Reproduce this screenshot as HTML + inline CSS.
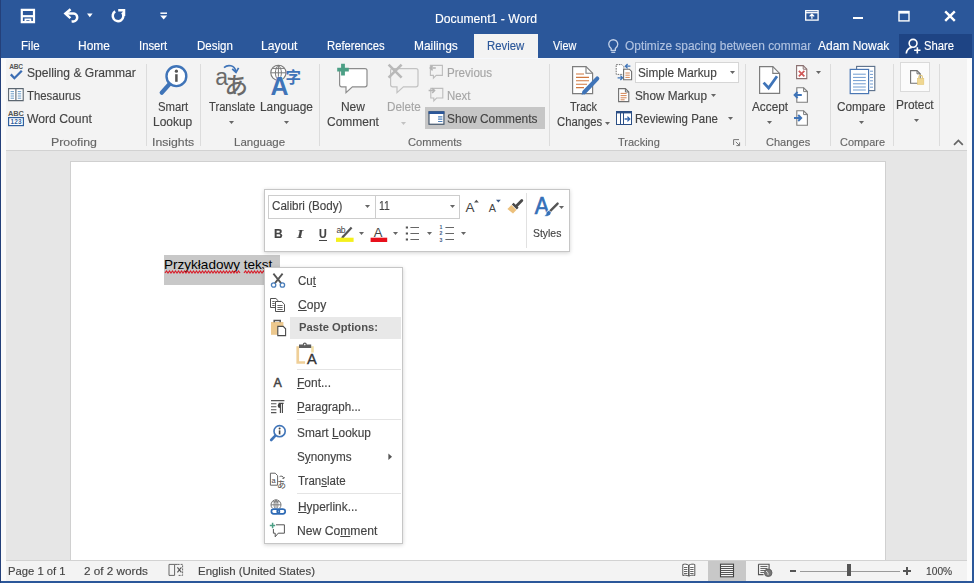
<!DOCTYPE html>
<html lang="en"><head><meta charset="utf-8"><title>Document1 - Word</title>
<style>
html,body{margin:0;padding:0}
body{width:974px;height:583px;overflow:hidden;position:relative;background:#e6e6e6;font-family:"Liberation Sans",sans-serif}
.t{position:absolute;white-space:nowrap;font-family:"Liberation Sans",sans-serif;transform-origin:0 50%;-webkit-text-stroke:0.15px currentColor}
.a{position:absolute}
svg{position:absolute;overflow:visible}
u{text-decoration:underline;text-underline-offset:1px}
.sep{position:absolute;top:64px;width:1px;height:82px;background:#dcdcdc}
svg.dd{width:5px;height:3px;fill:#666}

</style></head>
<body>
<!-- title bar + tab row -->
<div class="a" style="left:0;top:0;width:974px;height:58px;background:#2b579a"></div>
<div class="a" style="left:474px;top:33.500px;width:64px;height:24.500px;background:#f3f3f3"></div>
<div class="a" style="left:899px;top:33.500px;width:75px;height:24.500px;background:#1e4484"></div>
<!-- ribbon -->
<div class="a" style="left:0;top:58px;width:974px;height:92px;background:#f3f3f3;border-bottom:1px solid #d2d2d2"></div>
<div class="sep" style="left:146px"></div>
<div class="sep" style="left:200px"></div>
<div class="sep" style="left:319px"></div>
<div class="sep" style="left:549px"></div>
<div class="sep" style="left:745px"></div>
<div class="sep" style="left:830px"></div>
<div class="sep" style="left:893px"></div>
<div class="sep" style="left:938.5px"></div>
<div class="a" style="left:425px;top:107px;width:119.500px;height:22.400px;background:#c6c6c6"></div>
<div class="a" style="left:635px;top:62px;width:104px;height:21px;background:#fff;border:1px solid #d6d6d6;box-sizing:border-box"></div>
<div class="a" style="left:900px;top:62px;width:30px;height:30px;background:#fbfbfb;border:1px solid #dadada;box-sizing:border-box"></div>
<!-- document -->
<div class="a" style="left:70px;top:161px;width:816px;height:400px;background:#fff;border:1px solid #d0d0d0;box-sizing:border-box"></div>
<div class="a" style="left:164px;top:255px;width:116px;height:30px;background:#c8c8c8"></div>
<!-- status bar -->
<div class="a" style="left:0;top:560px;width:974px;height:23px;background:#f3f3f3;border-top:1px solid #d2d2d2;box-sizing:border-box"></div>
<div class="a" style="left:708px;top:561px;width:38px;height:20px;background:#c8c8c8"></div>
<!-- window borders -->
<div class="a" style="left:0;top:581px;width:974px;height:2px;background:#2b579a"></div>
<div class="a" style="left:1px;top:58px;width:5px;height:523px;background:#fafafa"></div>
<div class="a" style="left:966.500px;top:58px;width:5.500px;height:523px;background:#fcfcfc"></div>
<div class="a" style="left:0;top:57.500px;width:974px;height:1px;background:#f6f8fc"></div>
<div class="a" style="left:0;top:0;width:1px;height:583px;background:#24407a"></div>
<div class="a" style="left:971.500px;top:0;width:2.500px;height:583px;background:#2b579a"></div>
<span class="t" style="left:163.60px;top:258.30px;font-size:13px;line-height:13px;color:#000;transform:scaleX(1.0418);-webkit-text-stroke:0">Przykładowy tekst</span>
<!-- red squiggles -->
<svg style="left:165px;top:270px" width="110" height="4" viewBox="0 0 110 4"><path id="sq" d="M0 3l1.500-2 1.500 2 1.500-2 1.500 2 1.500-2 1.500 2 1.500-2 1.500 2 1.500-2 1.500 2 1.500-2 1.500 2 1.500-2 1.500 2 1.500-2 1.500 2 1.500-2 1.500 2 1.500-2 1.500 2 1.500-2 1.500 2 1.500-2 1.500 2 1.500-2 1.500 2 1.500-2 1.500 2 1.500-2 1.500 2 1.500-2 1.500 2 1.500-2 1.500 2 1.500-2 1.500 2 1.500-2 1.500 2 1.500-2 1.500 2 1.500-2 1.500 2 1.500-2 1.500 2 1.500-2 1.500 2 1.500-2 1.500 2 1.500-2 1.500 2" fill="none" stroke="#d8202c" stroke-width="1.200"/><path d="M79 3l1.500-2 1.500 2 1.500-2 1.500 2 1.500-2 1.500 2 1.500-2 1.500 2 1.500-2 1.500 2 1.500-2 1.500 2 1.500-2 1.500 2 1.500-2 1.500 2 1.500-2 1.500 2" fill="none" stroke="#d8202c" stroke-width="1.200"/></svg>

<!-- mini toolbar -->
<div class="a" style="left:264px;top:189px;width:306px;height:63px;background:#fff;border:1px solid #c6c6c6;box-sizing:border-box;box-shadow:0 1px 4px rgba(0,0,0,.18)"></div>
<div class="a" style="left:268px;top:195px;width:108px;height:24px;border:1px solid #cdcdcd;box-sizing:border-box;background:#fff"></div>
<div class="a" style="left:375px;top:195px;width:85px;height:24px;border:1px solid #cdcdcd;box-sizing:border-box;background:#fff"></div>
<div class="a" style="left:526px;top:193px;width:1px;height:55px;background:#e1e1e1"></div>
<!-- context menu -->
<div class="a" style="left:264px;top:267px;width:139px;height:277px;background:#fff;border:1px solid #c6c6c6;box-sizing:border-box;box-shadow:0 1px 4px rgba(0,0,0,.18)"></div>
<div class="a" style="left:290px;top:317px;width:110.600px;height:21.700px;background:#e8e8e8"></div>
<div class="a" style="left:297px;top:369px;width:103.500px;height:1px;background:#e4e4e4"></div>
<div class="a" style="left:297px;top:419px;width:103.500px;height:1px;background:#e4e4e4"></div>
<div class="a" style="left:297px;top:493px;width:103.500px;height:1px;background:#e4e4e4"></div>
<!-- title bar icons -->
<svg style="left:20px;top:8px" width="16" height="16" viewBox="0 0 16 16"><path d="M1.800 1.900h12.200v12.200H1.800z" fill="none" stroke="#fff" stroke-width="2.200"/><path d="M1.800 8.200h12.200" stroke="#fff" stroke-width="2.200"/><path d="M5.400 14v-2.600h5V14" fill="none" stroke="#fff" stroke-width="1.800"/></svg>
<svg style="left:63px;top:8px" width="18" height="16" viewBox="0 0 18 16"><path d="M2.600 5.600h7.400a3.900 3.900 0 0 1 .6 7.800l-2 .2" fill="none" stroke="#fff" stroke-width="2.500"/><path d="M7.600 1.200 2.400 5.600l5 4.600" fill="none" stroke="#fff" stroke-width="2.500"/></svg>
<svg style="left:87px;top:13px" width="6" height="5" viewBox="0 0 6 5"><path d="M0 .6h5.600L2.800 4.200z" fill="#fff"/></svg>
<svg style="left:110px;top:8px" width="17" height="16" viewBox="0 0 17 16"><path d="M5.200 3.400A5.300 5.300 0 1 0 12.200 4.600" fill="none" stroke="#fff" stroke-width="2.500"/><path d="M8.200 2.200h5.800v5.800" fill="none" stroke="#fff" stroke-width="2.500"/></svg>
<svg style="left:160px;top:12px" width="8" height="8" viewBox="0 0 8 8"><path d="M.4 1.200h6.600" stroke="#fff" stroke-width="1.500"/><path d="M.2 3.600h7L3.700 7.600z" fill="#fff"/></svg>
<!-- window controls -->
<svg style="left:804.500px;top:10.400px" width="14" height="11" viewBox="0 0 14 11"><rect x=".7" y=".7" width="12.400" height="9.400" fill="none" stroke="#fff" stroke-width="1.300"/><path d="M.7 2.700h12.400" stroke="#fff" stroke-width="1.300"/><path d="M6.900 8.800V4.400M4.600 6.400l2.300-2.200 2.300 2.200" fill="none" stroke="#fff" stroke-width="1.300"/></svg>
<div class="a" style="left:853px;top:16.600px;width:10px;height:2.500px;background:#fff"></div>
<svg style="left:898px;top:10px" width="12" height="12" viewBox="0 0 12 12"><rect x="1" y="1.5" width="10" height="9.4" fill="none" stroke="#fff" stroke-width="1.4"/><path d="M1 2.4h10" stroke="#fff" stroke-width="2.4"/></svg>
<svg style="left:944px;top:10px" width="12" height="12" viewBox="0 0 12 12"><path d="M1.2 1.4l9.6 9.4M10.8 1.4 1.2 10.8" stroke="#fff" stroke-width="2.4"/></svg>
<!-- tell me bulb + share icon -->
<svg style="left:606.500px;top:38px" width="13.200" height="16.500" viewBox="0 0 12 15"><path d="M3.8 9.6C2.4 8.6 1.6 7.3 1.6 5.7a4.1 4.1 0 0 1 8.2 0c0 1.600-.8 2.900-2.200 3.900v1.600H3.800z" fill="none" stroke="#c3d1e8" stroke-width="1.2"/><path d="M3.9 13h3.600" stroke="#c3d1e8" stroke-width="1.200"/></svg>
<svg style="left:905px;top:37.500px" width="17" height="17" viewBox="0 0 16 16"><circle cx="7.6" cy="5" r="3.700" fill="none" stroke="#fff" stroke-width="1.5"/><path d="M1.2 14.600c.4-3.400 2.600-5.400 5.200-5.800" fill="none" stroke="#fff" stroke-width="1.5"/><path d="M11.600 8.600v6M8.600 11.600h6" stroke="#fff" stroke-width="1.500"/></svg>
<!-- ribbon: proofing icons -->
<svg style="left:8px;top:62px" width="17" height="19" viewBox="0 0 17 19"><text x="1.2" y="7.2" font-family="Liberation Sans, sans-serif" font-size="6.6" font-weight="bold" fill="#555" letter-spacing="-0.2">ABC</text><path d="M2.800 12.400l3.600 3.800 7.400-7.400" fill="none" stroke="#3b6db3" stroke-width="2.300"/></svg>
<svg style="left:8px;top:88px" width="16" height="14" viewBox="0 0 16 14"><path d="M.6.600h14.600v12H.6zM7.900.6v12" fill="#fff" stroke="#5b6670" stroke-width="1.100"/><path d="M2.600 3.600h3.400M2.600 5.800h3.400M2.600 8h3.400M2.600 10.200h3.400M9.800 3.600h3.400M9.800 5.800h3.400M9.800 8h3.400M9.800 10.200h3.400" stroke="#5a8fc0" stroke-width=".9"/></svg>
<svg style="left:8px;top:110px" width="16" height="17" viewBox="0 0 16 17"><text x="0" y="6" font-family="Liberation Sans, sans-serif" font-size="7.4" font-weight="bold" fill="#555" letter-spacing="-0.1">ABC</text><rect x=".6" y="7.600" width="14.800" height="8" fill="#fff" stroke="#2f5f9e" stroke-width="1.200"/><text x="2.400" y="14.200" font-family="Liberation Sans, sans-serif" font-size="6.4" font-weight="bold" fill="#2f5f9e" letter-spacing="0.2">123</text></svg>
<!-- smart lookup -->
<svg style="left:157px;top:63px" width="32" height="33" viewBox="0 0 32 33"><path d="M12.200 21.400 4.800 29.600" stroke="#3f74b8" stroke-width="4.400" stroke-linecap="round"/><circle cx="19.400" cy="13.200" r="9.900" fill="#fff" stroke="#3f74b8" stroke-width="2.400"/><circle cx="19.400" cy="8.200" r="1.600" fill="#555"/><path d="M19.400 11.200v7.600" stroke="#555" stroke-width="2.500"/></svg>
<!-- translate -->
<svg style="left:214px;top:62px" width="34" height="36" viewBox="0 0 34 36"><text x="1.200" y="22.600" font-family="Liberation Sans, sans-serif" font-size="23" fill="#6a6a6a">a</text><text x="10.600" y="32.400" font-family="Noto Sans CJK JP, sans-serif" font-size="23.500" font-weight="500" fill="#6a6a6a">あ</text><path d="M10 5.600c4-3.600 10.400-2.400 11.800 3.400" fill="none" stroke="#3f74b8" stroke-width="1.700"/><path d="M18.200 6.800l3.800 3.600 2.600-4.600" fill="none" stroke="#3f74b8" stroke-width="1.700"/></svg>
<!-- language -->
<svg style="left:268px;top:62px" width="34" height="34" viewBox="0 0 34 34"><circle cx="10.400" cy="10.800" r="7.600" fill="#fff" stroke="#7a7a7a" stroke-width="1.100"/><path d="M2.800 10.800h15.200M10.400 3.200v15.200M4.400 6.400h12M10.400 3.200c-4 3.600-4 11.600 0 15.200M10.400 3.200c4 3.600 4 11.600 0 15.200" fill="none" stroke="#7a7a7a" stroke-width="1"/><text x="2.400" y="32.600" font-family="Liberation Sans, sans-serif" font-size="25" font-weight="bold" fill="#3f74b8" stroke="#f3f3f3" stroke-width=".6" paint-order="stroke">A</text><text x="17.600" y="21.400" font-family="Noto Sans CJK SC, sans-serif" font-size="15.500" font-weight="bold" fill="#3f74b8">字</text></svg>
<!-- new comment -->
<svg style="left:336px;top:63px" width="33" height="31" viewBox="0 0 33 31"><path d="M5.600 5.600h23.400a2 2 0 0 1 2 2v14.200a2 2 0 0 1-2 2H16.400l-6.400 5.800v-5.800H5.600a2 2 0 0 1-2-2V7.600a2 2 0 0 1 2-2z" fill="#fff" stroke="#8c8c8c" stroke-width="1.200"/><path d="M7 .8v11.600M1.200 6.600h11.600" stroke="#4c9f85" stroke-width="3.800"/></svg>
<!-- delete comment (disabled) -->
<svg style="left:387px;top:63px" width="33" height="31" viewBox="0 0 33 31"><path d="M5.600 5.600h23.400a2 2 0 0 1 2 2v14.200a2 2 0 0 1-2 2H16.400l-6.400 5.800v-5.800H5.600a2 2 0 0 1-2-2V7.600a2 2 0 0 1 2-2z" fill="#f3f3f3" stroke="#c2c2c2" stroke-width="1.200"/><path d="M1.600 1.600l13 13M14.600 1.600l-13 13" stroke="#b9b9b9" stroke-width="2.600"/></svg>
<!-- previous / next comment (disabled) -->
<svg style="left:428px;top:64px" width="16" height="15" viewBox="0 0 16 15"><path d="M2.400 1.400h12v10H8.200l-2.800 2.800v-2.800h-3z" fill="#f3f3f3" stroke="#bdbdbd" stroke-width="1.100"/><path d="M2.200 4h5.600M4.600 1.600 2.200 4l2.400 2.400" fill="none" stroke="#b4b4b4" stroke-width="1.500"/></svg>
<svg style="left:428px;top:87px" width="16" height="15" viewBox="0 0 16 15"><path d="M2.800 1.400h12v9.600H8.600l-2.800 2.800v-2.800h-3z" fill="#f3f3f3" stroke="#bdbdbd" stroke-width="1.100"/><path d="M.6 3.600h6M4.200 1.200l2.400 2.400-2.400 2.400" fill="none" stroke="#b4b4b4" stroke-width="1.500"/></svg>
<!-- show comments -->
<svg style="left:427.500px;top:110.600px" width="17.500" height="14.200" viewBox="0 0 18 15"><rect x=".8" y=".8" width="15.800" height="13.200" fill="#fff" stroke="#3c4f66" stroke-width="1.200"/><path d="M.4 1.800h16.600" stroke="#2b579a" stroke-width="2.800"/><path d="M10.400 6.200h4.600M10.400 8.600h4.600M10.400 11h4.600" stroke="#4a7ebb" stroke-width="1.100"/></svg>
<!-- dropdown arrows in ribbon -->
<svg class="dd" style="left:229px;top:120.6px"><path d="M0 0h5L2.500 3z"/></svg>
<svg class="dd" style="left:284px;top:120.6px"><path d="M0 0h5L2.500 3z"/></svg>
<svg class="dd" style="left:401px;top:121.6px;fill:#c2c2c2"><path d="M0 0h5L2.500 3z"/></svg>
<svg class="dd" style="left:605px;top:121.6px"><path d="M0 0h5L2.500 3z"/></svg>
<svg class="dd" style="left:730px;top:71px"><path d="M0 0h5L2.500 3z"/></svg>
<svg class="dd" style="left:711px;top:94px"><path d="M0 0h5L2.500 3z"/></svg>
<svg class="dd" style="left:728px;top:117px"><path d="M0 0h5L2.500 3z"/></svg>
<svg class="dd" style="left:767px;top:120.6px"><path d="M0 0h5L2.500 3z"/></svg>
<svg class="dd" style="left:816px;top:71px"><path d="M0 0h5L2.500 3z"/></svg>
<svg class="dd" style="left:859px;top:120.6px"><path d="M0 0h5L2.500 3z"/></svg>
<svg class="dd" style="left:914px;top:119px"><path d="M0 0h5L2.500 3z"/></svg>
<!-- track changes -->
<svg style="left:571px;top:65px" width="30" height="31" viewBox="0 0 30 31"><path d="M1.600 1.600h13.400l6.600 6.600v20.400H1.600z" fill="#fff" stroke="#7d7d7d" stroke-width="1.200"/><path d="M15 1.600v6.600h6.600" fill="none" stroke="#7d7d7d" stroke-width="1.100"/><path d="M5 9h8M5 12.400h13M5 15.800h13M5 19.200h11M5 22.600h8" stroke="#d0773f" stroke-width="1.100"/><path d="M26.200 13.600 13.200 27.200" stroke="#3f74b8" stroke-width="4.200" stroke-linecap="round"/><path d="M12.600 26l-2.200 4 4.200-1.800z" fill="#3f74b8"/></svg>
<!-- display for review -->
<svg style="left:615px;top:63px" width="18" height="18" viewBox="0 0 18 18"><path d="M1.200 1.600h5.600l2 2v7.800H1.200z" fill="#fff" stroke="#6f6f6f" stroke-width="1" stroke-dasharray="1.600 1"/><path d="M8.600 6.200h5.800l2.200 2.200v8.400H8.600z" fill="#fff" stroke="#6f6f6f" stroke-width="1.100"/><path d="M10.400 10h4.400M10.400 12.200h4.400M10.400 14.400h4.400" stroke="#d0773f" stroke-width=".9"/><path d="M10.600 3.200h4.800M12.600 1l-2.200 2.200 2.200 2.200" fill="none" stroke="#3f74b8" stroke-width="1.300"/><path d="M2.600 14.800h4.800M5.400 12.600l2.200 2.200-2.200 2.200" fill="none" stroke="#3f74b8" stroke-width="1.300"/></svg>
<!-- show markup -->
<svg style="left:617px;top:87px" width="14" height="16" viewBox="0 0 14 16"><path d="M1.600 1.600h6.800l3.400 3.400v9.600H1.600z" fill="#fff" stroke="#6f6f6f" stroke-width="1.100"/><path d="M8.400 1.600v3.400h3.400" fill="none" stroke="#6f6f6f" stroke-width="1"/><path d="M3.600 6.400h6M3.600 8.600h6M3.600 10.800h6M3.600 12.800h4" stroke="#d0773f" stroke-width=".9"/></svg>
<!-- reviewing pane -->
<svg style="left:615px;top:110px" width="18" height="16" viewBox="0 0 18 16"><rect x="1.500" y="1.500" width="15" height="13" fill="#fff" stroke="#2b4f86" stroke-width="1"/><path d="M1 2.200h16" stroke="#2b4f86" stroke-width="2.400"/><path d="M5.500 3v11.400M8.500 3v11.400" stroke="#2b4f86" stroke-width="1"/><path d="M9.600 9h5M12.400 6.600l2.400 2.400-2.400 2.400" fill="none" stroke="#3566ad" stroke-width="1.300"/></svg>
<!-- dialog launcher -->
<svg style="left:733px;top:139px" width="8" height="8" viewBox="0 0 8 8"><path d="M.6 6V.6H6" fill="none" stroke="#777" stroke-width="1"/><path d="M2.800 2.800l3.600 3.600M6.600 3.400v3.200H3.400" fill="none" stroke="#777" stroke-width="1"/></svg>
<!-- accept -->
<svg style="left:758px;top:65px" width="24" height="30" viewBox="0 0 24 30"><path d="M1.600 1.600h13.200l6.800 6.800v20H1.600z" fill="#fff" stroke="#7d7d7d" stroke-width="1.200"/><path d="M14.800 1.600v6.800h6.800" fill="none" stroke="#7d7d7d" stroke-width="1.100"/><path d="M5.600 17.600l5 5.400 8.400-11.800" fill="none" stroke="#3f74b8" stroke-width="2.800"/></svg>
<!-- reject -->
<svg style="left:795px;top:64px" width="14" height="16" viewBox="0 0 14 16"><path d="M1.600 1.600h6.600l3.600 3.600v9.400H1.600z" fill="#fff" stroke="#8a7070" stroke-width="1.100"/><path d="M8.200 1.600v3.600h3.600" fill="none" stroke="#8a7070" stroke-width="1"/><path d="M3.800 6.800l5.600 5.600M9.400 6.800l-5.600 5.600" stroke="#d05858" stroke-width="1.700"/></svg>
<!-- previous change -->
<svg style="left:793px;top:86px" width="16" height="18" viewBox="0 0 16 18"><path d="M3.800 1.800h6.800l3.800 3.800v10.600H3.800z" fill="#fff" stroke="#7d7d7d" stroke-width="1.100"/><path d="M10.600 1.800v3.800h3.800" fill="none" stroke="#7d7d7d" stroke-width="1"/><path d="M1.600 9h7.200M4.600 6L1.600 9l3 3" fill="none" stroke="#3f74b8" stroke-width="1.900"/></svg>
<!-- next change -->
<svg style="left:793px;top:109px" width="16" height="18" viewBox="0 0 16 18"><path d="M3.800 1.800h6.800l3.800 3.800v10.600H3.800z" fill="#fff" stroke="#7d7d7d" stroke-width="1.100"/><path d="M10.600 1.800v3.800h3.800" fill="none" stroke="#7d7d7d" stroke-width="1"/><path d="M1 9h7.200M5.200 6l3 3-3 3" fill="none" stroke="#3f74b8" stroke-width="1.900"/></svg>
<!-- compare -->
<svg style="left:849px;top:65px" width="28" height="30" viewBox="0 0 28 30"><rect x="7.600" y="1.400" width="18.200" height="24.200" fill="#fff" stroke="#5a6f8a" stroke-width="1.100"/><path d="M21 6.200h3M21 9.400h3M21 12.600h3M21 15.800h3M21 19h3M21 22.200h3" stroke="#6f9bd0" stroke-width="1"/><rect x="1.200" y="4.400" width="18.400" height="24.200" fill="#fff" stroke="#4a77b4" stroke-width="1.200"/><path d="M4 9.200h12.800M4 12.400h12.800M4 15.600h12.800M4 18.800h12.800M4 22h12.800M4 25h12.800" stroke="#6f9bd0" stroke-width="1"/></svg>
<!-- protect -->
<svg style="left:909px;top:69px" width="17" height="17" viewBox="0 0 17 17"><path d="M1.600 1.600h6.400l3.200 3.200v9.400H1.600z" fill="#fff" stroke="#707070" stroke-width="1.100"/><path d="M8 1.600v3.200h3.200" fill="none" stroke="#707070" stroke-width="1"/><rect x="8.400" y="9.400" width="6.400" height="6" fill="#f0d792" stroke="#e2c572" stroke-width=".6"/><path d="M9.800 9.400V8a1.800 1.800 0 0 1 3.600 0v1.400" fill="none" stroke="#e2c572" stroke-width="1.100"/></svg>
<!-- collapse ribbon -->
<svg style="left:953px;top:139px" width="11" height="7" viewBox="0 0 11 7"><path d="M1 5.800l4.400-4.400 4.400 4.400" fill="none" stroke="#666" stroke-width="1.700"/></svg>
<!-- mini toolbar icons -->
<svg class="dd" style="left:365px;top:205px"><path d="M0 0h5L2.500 3z"/></svg>
<svg class="dd" style="left:450px;top:205px"><path d="M0 0h5L2.500 3z"/></svg>
<svg class="dd" style="left:359px;top:232px"><path d="M0 0h5L2.500 3z"/></svg>
<svg class="dd" style="left:393px;top:232px"><path d="M0 0h5L2.500 3z"/></svg>
<svg class="dd" style="left:427px;top:232px"><path d="M0 0h5L2.500 3z"/></svg>
<svg class="dd" style="left:461px;top:232px"><path d="M0 0h5L2.500 3z"/></svg>
<svg class="dd" style="left:559px;top:206px"><path d="M0 0h5L2.500 3z"/></svg>
<!-- grow / shrink font -->
<svg style="left:465px;top:199px" width="16" height="15" viewBox="0 0 16 15"><text x=".6" y="13.400" font-family="Liberation Sans, sans-serif" font-size="13.500" fill="#444">A</text><path d="M9 3.600h4.800l-2.400-2.800z" fill="#555"/></svg>
<svg style="left:488px;top:199px" width="16" height="15" viewBox="0 0 16 15"><text x=".8" y="13.400" font-family="Liberation Sans, sans-serif" font-size="10.800" fill="#444">A</text><path d="M8 .800h4.800l-2.400 2.800z" fill="#3c5a86"/></svg>
<!-- format painter -->
<svg style="left:506px;top:198px" width="18" height="17" viewBox="0 0 18 17"><path d="M10.400 8 15.800 2.600" stroke="#4a4a4a" stroke-width="2.800" stroke-linecap="round"/><path d="M7.600 4.800l5 5-1.800 1.800-5-5z" fill="#4a4a4a"/><path d="M5.400 7l5 5-3.400 3.400-5.600-4.400z" fill="#ecc07c"/></svg>
<!-- styles -->
<svg style="left:533px;top:195px" width="28" height="23" viewBox="0 0 28 23"><text transform="translate(1.800 19.200) scale(.9 1)" font-family="Liberation Sans, sans-serif" font-size="23.800" fill="#3570b8" stroke="#3570b8" stroke-width=".7">A</text><path d="M24.600 8.600 15.600 17.600" stroke="#555" stroke-width="2.400" stroke-linecap="round"/><path d="M16.200 15.400c-1.600 0-3 1.400-3.200 3.400-.2 1.400-1.400 2-2.600 2 3.600 1.400 7.200.4 7.800-3.200z" fill="#3570b8" stroke="#fff" stroke-width=".8"/></svg>
<!-- highlight -->
<svg style="left:335px;top:225px" width="20" height="18" viewBox="0 0 20 18"><text x="1.400" y="8.200" font-family="Liberation Sans, sans-serif" font-size="8.600" fill="#444" letter-spacing="-0.3">ab</text><path d="M16.600 2.600 7.400 12.600" stroke="#555" stroke-width="2.200"/><path d="M7.800 10.600l-2.200 3.200 3.600-1.600z" fill="#555"/><rect x="1" y="12.700" width="17.600" height="4.200" fill="#f4f01c"/></svg>
<!-- font color -->
<svg style="left:370px;top:226px" width="18" height="17" viewBox="0 0 18 17"><text x="3.800" y="11.200" font-family="Liberation Sans, sans-serif" font-size="13" fill="#444">A</text><rect x=".6" y="11.700" width="16.600" height="4.300" fill="#e8101c"/></svg>
<!-- bullets -->
<svg style="left:405px;top:225px" width="15" height="17" viewBox="0 0 15 17"><path d="M.8 2.500h2.200M.8 8.500h2.200M.8 14.500h2.200" stroke="#555" stroke-width="2"/><path d="M5.400 2.500h8.600M5.400 8.500h8.600M5.400 14.500h8.600" stroke="#666" stroke-width="1.100"/></svg>
<!-- numbering -->
<svg style="left:439px;top:225px" width="16" height="17" viewBox="0 0 16 17"><text x=".6" y="4.200" font-family="Liberation Sans, sans-serif" font-size="5.200" font-weight="bold" fill="#3c5a86">1</text><text x=".6" y="10.400" font-family="Liberation Sans, sans-serif" font-size="5.200" font-weight="bold" fill="#3c5a86">2</text><text x=".6" y="16.600" font-family="Liberation Sans, sans-serif" font-size="5.200" font-weight="bold" fill="#3c5a86">3</text><path d="M6.400 2.500h8.600M6.400 8.500h8.600M6.400 14.500h8.600" stroke="#666" stroke-width="1.100"/></svg>
<div class="a" style="left:318.500px;top:239.700px;width:8.200px;height:1px;background:#444"></div>
<!-- context menu icons -->
<svg style="left:270px;top:272px" width="16" height="17" viewBox="0 0 16 17"><path d="M3.400 1.600 11.200 11.400M12.600 1.600 4.800 11.400" stroke="#555" stroke-width="1.800"/><circle cx="3.600" cy="13" r="2.200" fill="#fff" stroke="#4a7ebb" stroke-width="1.300"/><circle cx="12.400" cy="13" r="2.200" fill="#fff" stroke="#4a7ebb" stroke-width="1.300"/></svg>
<svg style="left:269px;top:297px" width="17" height="16" viewBox="0 0 17 16"><path d="M1.500 1.500h5.400l2.600 2.600v6.400H1.500z" fill="#fff" stroke="#505050" stroke-width="1"/><path d="M3.300 4.500h2.400M3.300 6.500h2.400M3.300 8.500h2.400" stroke="#666" stroke-width="1"/><path d="M6.500 4.500h6.200l2.800 2.800v7.200H6.500z" fill="#fff" stroke="#505050" stroke-width="1"/><path d="M8.400 8.500h5.200M8.400 10.500h5.200M8.400 12.500h5.200" stroke="#666" stroke-width="1"/></svg>
<svg style="left:270px;top:319px" width="17" height="18" viewBox="0 0 17 18"><rect x="1" y="3" width="12.400" height="12.800" fill="#ecc88e"/><path d="M4.200 3.200V1.600h6v1.600" fill="none" stroke="#555" stroke-width="1.500"/><path d="M7.800 7.400h5.400l2.400 2.400v6.800H7.800z" fill="#fff" stroke="#4a4a4a" stroke-width="1.100"/></svg>
<svg style="left:296px;top:342px" width="22" height="24" viewBox="0 0 22 24"><path d="M.4 4.200h2.700v15h6v2.600H.4z" fill="#efcf98"/><path d="M15.200 4.200h2.600v6.400h-2.600z" fill="#f1dfa6"/><path d="M3 2.600h3.800a2 2 0 0 1 4 0h4.400v3.300H3z" fill="#5e5e5e"/><circle cx="8.800" cy="2.600" r=".8" fill="#fff"/><text x="10.900" y="22.400" font-family="Liberation Sans, sans-serif" font-size="14.600" fill="#333" stroke="#333" stroke-width=".35">A</text></svg>
<svg style="left:273px;top:376px" width="12" height="12" viewBox="0 0 12 12"><text x=".6" y="11" font-family="Liberation Sans, sans-serif" font-size="12.400" fill="#444" stroke="#444" stroke-width=".5">A</text></svg>
<svg style="left:270px;top:399px" width="15" height="15" viewBox="0 0 15 15"><path d="M1 1.600h13.400M1 4.800h5.400M1 7.800h5.400M1 10.800h5.400M1 13.600h5.400" stroke="#555" stroke-width="1.100"/><path d="M10 4.400a2.300 2.300 0 0 0 0 4.600z" fill="#444"/><path d="M8.600 4.400h5M10.400 4.400v9.600M12.400 4.400v9.600" stroke="#444" stroke-width="1.100"/></svg>
<svg style="left:269px;top:424px" width="18" height="18" viewBox="0 0 18 18"><path d="M6.400 11.600 2.200 16" stroke="#3f74b8" stroke-width="2.600" stroke-linecap="round"/><circle cx="10.600" cy="7.200" r="5.600" fill="#fff" stroke="#3f74b8" stroke-width="1.600"/><circle cx="10.600" cy="4.600" r="1" fill="#444"/><path d="M10.600 6.400v4" stroke="#444" stroke-width="1.600"/></svg>
<svg style="left:388px;top:453px" width="5" height="8" viewBox="0 0 5 8"><path d="M.4.400v6.600L4 3.700z" fill="#555"/></svg>
<svg style="left:269px;top:472px" width="18" height="18" viewBox="0 0 18 18"><path d="M1.400 1.200h4.800l2.400 2.400v9.600H1.400z" fill="#fff" stroke="#666" stroke-width="1"/><text x="2.400" y="10.600" font-family="Liberation Sans, sans-serif" font-size="7.400" fill="#444">a</text><text x="8" y="16.400" font-family="Noto Sans CJK JP, sans-serif" font-size="9" fill="#444">あ</text><path d="M10.600 4.600c1.600-1 3.400-.4 4 1.200M13.400 6.400l1.400.2.600-1.600" fill="none" stroke="#555" stroke-width=".9"/></svg>
<svg style="left:269px;top:499px" width="18" height="17" viewBox="0 0 18 17"><circle cx="7" cy="5.800" r="5" fill="#fff" stroke="#777" stroke-width="1"/><path d="M2 5.800h10M7 .8v10M3.400 2.800h7.200M7 .8c-2.600 2.400-2.600 7.600 0 10M7 .8c2.600 2.400 2.600 7.600 0 10" fill="none" stroke="#777" stroke-width=".9"/><rect x="1.400" y="9.400" width="15.400" height="6.400" fill="#fff"/><rect x="2.400" y="10.200" width="8" height="4.600" rx="2.300" fill="none" stroke="#2f6bb5" stroke-width="1.700"/><rect x="8.200" y="10.200" width="8" height="4.600" rx="2.300" fill="none" stroke="#2f6bb5" stroke-width="1.700"/></svg>
<svg style="left:269px;top:522px" width="17" height="16" viewBox="0 0 17 16"><path d="M4.400 2.800h11v8.400H9.200l-3 3.600v-3.600H4.400z" fill="#fff" stroke="#555" stroke-width="1"/><rect x="0" y="0" width="7" height="7" fill="#fff"/><path d="M3.600.8v5.400M.8 3.600h5.400" stroke="#4c9f85" stroke-width="1.500"/></svg>
<!-- status bar icons -->
<svg style="left:168px;top:563px" width="16" height="14" viewBox="0 0 16 14"><path d="M1 1.400h5.600v11H1zM6.600 1.400h3" fill="none" stroke="#666" stroke-width="1"/><path d="M9.600 1.400h5v11h-5" fill="none" stroke="#666" stroke-width="1" stroke-dasharray="2 1"/><path d="M9.400 4.400l4 5M13.400 4.400l-4 5" stroke="#555" stroke-width="1.100"/></svg>
<svg style="left:682px;top:563px" width="14" height="15" viewBox="0 0 14 15"><path d="M.8 1.500c2-.6 4-.4 5.800.6v11c-1.800-1-3.800-1.200-5.800-.6zM12.800 1.500c-2-.6-4-.4-5.800.6v11c1.800-1 3.800-1.200 5.800-.6z" fill="#fff" stroke="#555" stroke-width="1"/><path d="M2 4.500h3.400M2 6.500h3.400M2 8.500h3.400M2 10.500h3.400M8.200 4.500h3.400M8.200 6.500h3.400M8.200 8.500h3.400M8.200 10.500h3.400" stroke="#666" stroke-width="1"/></svg>
<svg style="left:719px;top:563px" width="16" height="15" viewBox="0 0 16 15"><rect x="1.500" y="1.200" width="13" height="12.600" fill="#f4f4f4" stroke="#444" stroke-width="1.100"/><path d="M2 3.500h12M2 5.500h12M2 7.500h12M2 9.500h12M2 11.500h12" stroke="#555" stroke-width="1"/></svg>
<svg style="left:757px;top:563px" width="16" height="15" viewBox="0 0 16 15"><path d="M1.500 1.200h10.600v5M1.500 1.200v10.400h5" fill="none" stroke="#555" stroke-width="1.100"/><path d="M3.400 3.500h7M3.400 5.500h7M3.400 7.500h4.600M3.400 9.500h3.600" stroke="#666" stroke-width="1"/><circle cx="11.200" cy="9.800" r="3.800" fill="#777" stroke="#555" stroke-width=".8"/><path d="M9 8.400c1.400.2 2.200 1.200 2 3.400" stroke="#e8e8e8" stroke-width="1" fill="none"/></svg>
<div class="a" style="left:790px;top:570px;width:6px;height:2px;background:#555"></div>
<div class="a" style="left:800px;top:571px;width:100px;height:1px;background:#9a9a9a"></div>
<div class="a" style="left:847px;top:564px;width:4px;height:12px;background:#555"></div>
<div class="a" style="left:903px;top:570px;width:8px;height:2px;background:#555"></div>
<div class="a" style="left:906px;top:567px;width:2px;height:8px;background:#555"></div>

<!-- text -->
<div class="a" style="left:0;top:0;width:974px;height:583px;will-change:transform">
<span class="t" style="left:435.00px;top:13.00px;font-size:12.5px;line-height:12.5px;color:#fff;transform:scaleX(0.9748);">Document1 - Word</span>
<span class="t" style="left:21.00px;top:40.20px;font-size:12.5px;line-height:12.5px;color:#fff;transform:scaleX(0.9267);">File</span>
<span class="t" style="left:77.50px;top:40.20px;font-size:12.5px;line-height:12.5px;color:#fff;transform:scaleX(0.9568);">Home</span>
<span class="t" style="left:139.00px;top:40.20px;font-size:12.5px;line-height:12.5px;color:#fff;transform:scaleX(0.9037);">Insert</span>
<span class="t" style="left:197.00px;top:40.20px;font-size:12.5px;line-height:12.5px;color:#fff;transform:scaleX(0.9218);">Design</span>
<span class="t" style="left:261.40px;top:40.20px;font-size:12.5px;line-height:12.5px;color:#fff;transform:scaleX(0.9705);">Layout</span>
<span class="t" style="left:326.80px;top:40.20px;font-size:12.5px;line-height:12.5px;color:#fff;transform:scaleX(0.9002);">References</span>
<span class="t" style="left:413.70px;top:40.20px;font-size:12.5px;line-height:12.5px;color:#fff;transform:scaleX(0.9556);">Mailings</span>
<span class="t" style="left:553.30px;top:40.20px;font-size:12.5px;line-height:12.5px;color:#fff;transform:scaleX(0.8669);">View</span>
<span class="t" style="left:486.70px;top:40.00px;font-size:12.5px;line-height:12.5px;color:#2b579a;transform:scaleX(0.9075);">Review</span>
<div class="a" style="left:0;top:0;width:810.6px;height:583px;overflow:hidden"><span class="t" style="left:624.60px;top:40.30px;font-size:12.5px;line-height:12.5px;color:#b0c2e0;transform:scaleX(0.9539);">Optimize spacing between commands</span></div>
<span class="t" style="left:817.80px;top:40.30px;font-size:12.5px;line-height:12.5px;color:#fff;transform:scaleX(0.9595);">Adam Nowak</span>
<span class="t" style="left:924.20px;top:40.30px;font-size:12.5px;line-height:12.5px;color:#fff;transform:scaleX(0.9003);">Share</span>
<span class="t" style="left:26.90px;top:66.70px;font-size:12px;line-height:12px;color:#444;transform:scaleX(1.0075);">Spelling &amp; Grammar</span>
<span class="t" style="left:27.00px;top:89.70px;font-size:12px;line-height:12px;color:#444;transform:scaleX(0.9474);">Thesaurus</span>
<span class="t" style="left:27.00px;top:112.80px;font-size:12px;line-height:12px;color:#444;transform:scaleX(1.0156);">Word Count</span>
<span class="t" style="left:50.50px;top:137.00px;font-size:11.5px;line-height:11.5px;color:#666;transform:scaleX(1.0732);">Proofing</span>
<span class="t" style="left:157.80px;top:100.70px;font-size:12px;line-height:12px;color:#444;transform:scaleX(0.9459);">Smart</span>
<span class="t" style="left:153.30px;top:116.30px;font-size:12px;line-height:12px;color:#444;transform:scaleX(0.9976);">Lookup</span>
<span class="t" style="left:152.30px;top:137.00px;font-size:11.5px;line-height:11.5px;color:#666;transform:scaleX(1.0646);">Insights</span>
<span class="t" style="left:208.80px;top:100.70px;font-size:12px;line-height:12px;color:#444;transform:scaleX(0.9308);">Translate</span>
<span class="t" style="left:259.50px;top:100.70px;font-size:12px;line-height:12px;color:#444;transform:scaleX(0.9905);">Language</span>
<span class="t" style="left:233.50px;top:137.00px;font-size:11.5px;line-height:11.5px;color:#666;transform:scaleX(0.9981);">Language</span>
<span class="t" style="left:340.90px;top:100.70px;font-size:12px;line-height:12px;color:#444;transform:scaleX(1.0000);">New</span>
<span class="t" style="left:326.90px;top:116.30px;font-size:12px;line-height:12px;color:#444;transform:scaleX(0.9982);">Comment</span>
<span class="t" style="left:386.50px;top:100.70px;font-size:12px;line-height:12px;color:#a6a6a6;transform:scaleX(0.9760);">Delete</span>
<span class="t" style="left:447.20px;top:67.00px;font-size:12px;line-height:12px;color:#a6a6a6;transform:scaleX(0.9655);">Previous</span>
<span class="t" style="left:447.20px;top:89.70px;font-size:12px;line-height:12px;color:#a6a6a6;transform:scaleX(0.9505);">Next</span>
<span class="t" style="left:447.20px;top:113.00px;font-size:12px;line-height:12px;color:#444;transform:scaleX(0.9900);">Show Comments</span>
<span class="t" style="left:407.50px;top:137.00px;font-size:11.5px;line-height:11.5px;color:#666;transform:scaleX(0.9674);">Comments</span>
<span class="t" style="left:570.30px;top:100.70px;font-size:12px;line-height:12px;color:#444;transform:scaleX(0.9140);">Track</span>
<span class="t" style="left:556.60px;top:116.30px;font-size:12px;line-height:12px;color:#444;transform:scaleX(0.9418);">Changes</span>
<span class="t" style="left:637.90px;top:67.00px;font-size:12px;line-height:12px;color:#444;transform:scaleX(0.9835);">Simple Markup</span>
<span class="t" style="left:635.20px;top:90.00px;font-size:12px;line-height:12px;color:#444;transform:scaleX(0.9807);">Show Markup</span>
<span class="t" style="left:635.20px;top:113.00px;font-size:12px;line-height:12px;color:#444;transform:scaleX(0.9566);">Reviewing Pane</span>
<span class="t" style="left:617.80px;top:137.00px;font-size:11.5px;line-height:11.5px;color:#666;transform:scaleX(0.9583);">Tracking</span>
<span class="t" style="left:751.50px;top:100.70px;font-size:12px;line-height:12px;color:#444;transform:scaleX(0.9811);">Accept</span>
<span class="t" style="left:766.00px;top:137.00px;font-size:11.5px;line-height:11.5px;color:#666;transform:scaleX(0.9589);">Changes</span>
<span class="t" style="left:837.30px;top:100.70px;font-size:12px;line-height:12px;color:#444;transform:scaleX(0.9817);">Compare</span>
<span class="t" style="left:839.70px;top:137.00px;font-size:11.5px;line-height:11.5px;color:#666;transform:scaleX(0.9511);">Compare</span>
<span class="t" style="left:896.40px;top:99.30px;font-size:12px;line-height:12px;color:#444;transform:scaleX(0.9896);">Protect</span>
<span class="t" style="left:7.50px;top:565.80px;font-size:11.5px;line-height:11.5px;color:#444;transform:scaleX(0.9778);">Page 1 of 1</span>
<span class="t" style="left:84.00px;top:565.80px;font-size:11.5px;line-height:11.5px;color:#444;transform:scaleX(1.0192);">2 of 2 words</span>
<span class="t" style="left:198.20px;top:565.80px;font-size:11.5px;line-height:11.5px;color:#444;transform:scaleX(0.9948);">English (United States)</span>
<span class="t" style="left:926.20px;top:565.80px;font-size:11.5px;line-height:11.5px;color:#444;transform:scaleX(0.8898);">100%</span>
<span class="t" style="left:272.00px;top:200.00px;font-size:12px;line-height:12px;color:#444;transform:scaleX(0.9681);">Calibri (Body)</span>
<span class="t" style="left:378.70px;top:200.00px;font-size:12px;line-height:12px;color:#444;transform:scaleX(0.8660);">11</span>
<span class="t" style="left:532.70px;top:227.60px;font-size:11.5px;line-height:11.5px;color:#444;transform:scaleX(0.9048);">Styles</span>
<span class="t" style="left:273.90px;top:227.70px;font-size:12px;line-height:12px;color:#444;transform:scaleX(1.0000);font-weight:bold">B</span>
<span class="t" style="left:297.20px;top:227.70px;font-size:12.5px;line-height:12.5px;color:#444;transform:scaleX(1.2834);font-style:italic;font-weight:bold;font-family:Liberation Serif,serif">I</span>
<span class="t" style="left:318.80px;top:227.70px;font-size:12px;line-height:12px;color:#444;transform:scaleX(0.8917);font-weight:bold">U</span>
<span class="t" style="left:297.80px;top:274.70px;font-size:12px;line-height:12px;color:#444;transform:scaleX(0.9587);">Cu<u>t</u></span>
<span class="t" style="left:297.50px;top:299.30px;font-size:12px;line-height:12px;color:#444;transform:scaleX(1.0108);"><u>C</u>opy</span>
<span class="t" style="left:299.20px;top:322.40px;font-size:11.5px;line-height:11.5px;color:#505050;transform:scaleX(0.9735);font-weight:bold;-webkit-text-stroke:0">Paste Options:</span>
<span class="t" style="left:297.00px;top:377.00px;font-size:12px;line-height:12px;color:#444;transform:scaleX(1.0000);"><u>F</u>ont...</span>
<span class="t" style="left:297.00px;top:401.10px;font-size:12px;line-height:12px;color:#444;transform:scaleX(0.9662);"><u>P</u>aragraph...</span>
<span class="t" style="left:297.00px;top:426.70px;font-size:12px;line-height:12px;color:#444;transform:scaleX(0.9891);">Smart <u>L</u>ookup</span>
<span class="t" style="left:297.10px;top:450.60px;font-size:12px;line-height:12px;color:#444;transform:scaleX(0.9764);">S<u>y</u>nonyms</span>
<span class="t" style="left:298.00px;top:474.90px;font-size:12px;line-height:12px;color:#444;transform:scaleX(0.9592);">Tran<u>s</u>late</span>
<span class="t" style="left:297.80px;top:500.70px;font-size:12px;line-height:12px;color:#444;transform:scaleX(0.9934);"><u>H</u>yperlink...</span>
<span class="t" style="left:297.00px;top:524.70px;font-size:12px;line-height:12px;color:#444;transform:scaleX(1.0127);">New Co<u>m</u>ment</span>
</div>
</body></html>
